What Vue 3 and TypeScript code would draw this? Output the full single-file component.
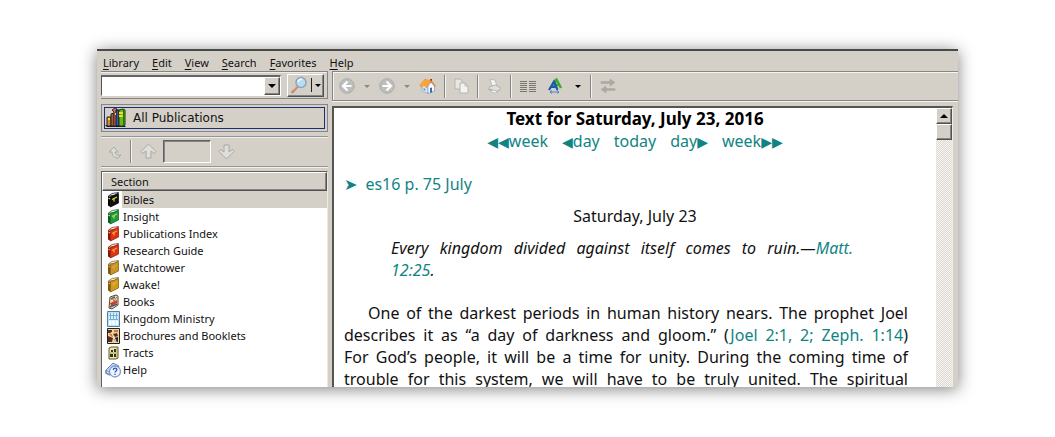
<script setup lang="ts">
import { ref } from 'vue'

interface Section {
  label: string
  icon: 'book' | 'books' | 'grid' | 'brochure' | 'tract' | 'help'
  cover?: string
  edge?: string
  mark?: string
}

const menus: string[] = ['Library', 'Edit', 'View', 'Search', 'Favorites', 'Help']

const sections: Section[] = [
  { label: 'Bibles', icon: 'book', cover: '#111111', edge: '#000000', mark: '#e8dc30' },
  { label: 'Insight', icon: 'book', cover: '#1f9a3c', edge: '#0b5a20', mark: '#b8e060' },
  { label: 'Publications Index', icon: 'book', cover: '#e03218', edge: '#8c1408', mark: '#f0b030' },
  { label: 'Research Guide', icon: 'book', cover: '#e03218', edge: '#8c1408', mark: '#f0b030' },
  { label: 'Watchtower', icon: 'book', cover: '#c8942a', edge: '#80580c', mark: '#d8a840' },
  { label: 'Awake!', icon: 'book', cover: '#cf9a18', edge: '#80580c', mark: '#e0b040' },
  { label: 'Books', icon: 'books' },
  { label: 'Kingdom Ministry', icon: 'grid' },
  { label: 'Brochures and Booklets', icon: 'brochure' },
  { label: 'Tracts', icon: 'tract' },
  { label: 'Help', icon: 'help' },
]

const selected = ref('Bibles')
const query = ref('')
const page = ref('')
</script>

<template>
  <div class="window">
    <nav class="menubar" aria-label="Main menu">
      <button v-for="m in menus" :key="m" type="button"><u>{{ m.charAt(0) }}</u>{{ m.slice(1) }}</button>
    </nav>

    <div class="main">
      <aside class="side">
        <form class="searchbar" @submit.prevent>
          <div class="combo">
            <input v-model="query" type="text" aria-label="Search text">
            <button type="button" class="drop" aria-label="Search history">
              <svg width="8" height="4" viewBox="0 0 8 4"><path d="M0 0h8L4 4z" fill="#000" /></svg>
            </button>
          </div>
          <button type="submit" class="find" aria-label="Search">
            <svg width="18" height="18" viewBox="0 0 18 18">
              <path d="M7.500 10.500 2.500 16" stroke="#c08468" stroke-width="2.600" stroke-linecap="round" />
              <path d="M7.500 9.500 3 14.500" stroke="#ecc0a4" stroke-width="1" />
              <circle cx="11" cy="6.500" r="5" fill="#b4e0f6" stroke="#8fa4b8" stroke-width="1.500" />
              <path d="M8 6a3 3 0 0 1 4-2.500" fill="none" stroke="#fff" stroke-width="1.500" />
            </svg>
            <i></i>
            <svg width="6" height="3" viewBox="0 0 6 3"><path d="M0 0h6L3 3z" fill="#000" /></svg>
          </button>
        </form>

        <div class="filter">
          <button type="button">
            <svg width="21" height="20" viewBox="0 0 21 20">
              <path d="M0 17h19l2 2H2z" fill="#10104a" />
              <path d="M2 9h4v9H2z" fill="#d88830" stroke="#222" />
              <path d="M6 6l3-1v13H6z" fill="#b05820" stroke="#222" />
              <path d="M7 2l3-2 2 1v17H9V4z" fill="#e06868" stroke="#333" />
              <path d="M11 2h3v16h-3z" fill="#3458c0" stroke="#111" />
              <path d="M14 2l4-1 2 1v15l-2 1h-4z" fill="#68b818" stroke="#163c08" />
              <path d="M10 6h1M14 5h4M3 11h2M14 8h4" stroke="#f0e020" stroke-width="2" />
              <path d="M18.500 2v15" stroke="#287008" />
            </svg>
            <span>All Publications</span>
          </button>
        </div>

        <div class="stepper">
          <button type="button" aria-label="Back up" disabled>
            <svg width="14" height="14" viewBox="0 0 14 14">
              <path d="M6 2 1 7h3c0 4 3 6 6 6l3-3c-3 1-6 0-6-3h3z" fill="#dcdcd8" stroke="#aaa9a3" stroke-linejoin="round" />
            </svg>
          </button>
          <i class="rule"></i>
          <button type="button" aria-label="Previous hit" disabled>
            <svg width="17" height="17" viewBox="0 0 17 17">
              <path d="M8.500 1 1 8.500l1.500 2L6 8v7h5V8l3.500 2.500 1.500-2z" fill="#dededb" stroke="#aaa9a3" stroke-linejoin="round" />
            </svg>
          </button>
          <input v-model="page" type="text" aria-label="Hit number" disabled>
          <button type="button" aria-label="Next hit" disabled>
            <svg width="17" height="17" viewBox="0 0 17 17">
              <path d="M8.500 16 1 8.500l1.500-2L6 9V2h5v7l3.500-2.500 1.500 2z" fill="#dededb" stroke="#aaa9a3" stroke-linejoin="round" />
            </svg>
          </button>
        </div>

        <section class="list">
          <h2>Section</h2>
          <ul>
            <li v-for="s in sections" :key="s.label">
              <button type="button" :class="{ on: selected === s.label }" @click="selected = s.label">
                <svg width="17" height="16" viewBox="0 0 17 16">
                  <g v-if="s.icon === 'book'">
                    <path d="M3.500 4 7 1.500l6.500-1-3.500 3z" fill="#f4f4f0" :stroke="s.edge" stroke-width=".7" />
                    <path d="M3 4l2.500 1v10L3 13.500z" :fill="s.edge" />
                    <path d="M5.500 4.500 13.500 1.500v9.500l-8 4z" :fill="s.cover" :stroke="s.edge" stroke-width=".7" />
                    <path d="M7 7.500 12 5M3.500 6l1.500 1M9 7v2.500" :stroke="s.mark" stroke-width="1.200" />
                  </g>
                  <g v-else-if="s.icon === 'books'">
                    <path d="M5 3l6-2 2 1v9l-6 4-3-1z" fill="#f0dfb8" stroke="#594522" />
                    <path d="M5 9l7-3v3l-6 3z" fill="#d03c32" />
                    <path d="M5 13l7-3M6 5l4-2" stroke="#4c557c" stroke-width="1.500" />
                    <path d="M7 4l2 3 3-4" fill="none" stroke="#8d7a45" />
                  </g>
                  <g v-else-if="s.icon === 'grid'">
                    <path d="M2.500.500h12v15h-12z" fill="#b8e2f6" stroke="#527ea0" />
                    <path d="M4 2h9v12H4z" fill="#d8f0fc" />
                    <path d="M5.500 2v7M8.500 2v7M11.500 2v7M4 4.500h9M4 8.500h9" stroke="#78acd0" />
                    <path d="M4 10h2v4H4zM7.500 10h2v4h-2zM11 10h2v4h-2z" fill="#fff" />
                  </g>
                  <g v-else-if="s.icon === 'brochure'">
                    <path d="M2.500.500h12v15h-12z" fill="#f0d49c" stroke="#222" />
                    <path d="M3 2h4v3H3zM8 6l4-1 1 3-3 1zM3 8l5 2-1 4H3z" fill="#5c3018" />
                    <path d="M9 2h4v2H9zM4 6l3-1 2 3-2 1z" fill="#d07440" />
                    <path d="M9 10l4-1v5l-3-1z" fill="#202830" />
                    <path d="M6 4l5 9" stroke="#f8f0e0" />
                  </g>
                  <g v-else-if="s.icon === 'tract'">
                    <path d="M4 3l2-1h7v11l-2 1H4z" fill="#eee5b0" stroke="#5c562c" />
                    <path d="M6 5h2v2H6zM9 4h2v3H9zM5 9h3v3H5zM9 9h2v3H9z" fill="#34361c" />
                    <path d="M12 3v10M5 8h6" stroke="#99a05c" />
                  </g>
                  <g v-else>
                    <path d="M1 8 8 1l6 3-2 3-7 4z" fill="#bfd4ef" stroke="#6a82b4" />
                    <path d="M1 8v3l4 2" fill="none" stroke="#6a82b4" stroke-width="1.500" />
                    <circle cx="10" cy="9.500" r="5.500" fill="#eef5ff" stroke="#7e9ad4" stroke-width="1.300" />
                    <path d="M8.300 8C8.300 5.500 12 5.700 11.800 7.800c0 1.200-1.800 1.200-1.800 2.700M10 11.800v1.200" fill="none" stroke="#2850a8" stroke-width="1.300" />
                  </g>
                </svg>
                <span>{{ s.label }}</span>
              </button>
            </li>
          </ul>
        </section>
      </aside>

      <main class="content">
        <div class="toolbar">
          <button type="button" aria-label="Back" disabled>
            <svg width="16" height="16" viewBox="0 0 16 16">
              <circle cx="8" cy="8" r="7.300" fill="#bdbdbc" stroke="#adadab" />
              <path d="M8.500 3.500 4 8l4.500 4.500M4.500 8h8" fill="none" stroke="#fff" stroke-width="2.200" />
            </svg>
          </button>
          <button type="button" class="caret off" aria-label="Back history" disabled></button>
          <button type="button" aria-label="Forward" disabled>
            <svg width="16" height="16" viewBox="0 0 16 16">
              <circle cx="8" cy="8" r="7.300" fill="#bdbdbc" stroke="#adadab" />
              <path d="M7.500 3.500 12 8l-4.500 4.500M11.500 8h-8" fill="none" stroke="#fff" stroke-width="2.200" />
            </svg>
          </button>
          <button type="button" class="caret off" aria-label="Forward history" disabled></button>
          <button type="button" aria-label="Home">
            <svg width="17" height="16" viewBox="0 0 17 16">
              <path d="M11 1h2v4h-2z" fill="#c42c20" />
              <path d="M3 8v5l6 2.500V8L6 5z" fill="#dce8f4" stroke="#8ba4c4" stroke-width=".7" />
              <path d="M9 8l3-4 3.500 4v5L9 15.500z" fill="#f8fbff" stroke="#7a94bc" stroke-width=".7" />
              <path d="M0.500 7.500 6 1l6 2-3.500 5-1 2L5 7.500l-2 2z" fill="#f6a43c" stroke="#f0983c" stroke-width=".7" />
              <path d="M12 3l4.500 5.500" stroke="#e08840" stroke-width="1.400" />
              <path d="M11 10l2-.5v4.800l-2 .7z" fill="#3c68ac" />
              <path d="M4.500 10l2 .8v2l-2-.8z" fill="#6a9ad0" />
            </svg>
          </button>
          <i class="rule"></i>
          <button type="button" aria-label="Copy" disabled>
            <svg width="15" height="16" viewBox="0 0 15 16">
              <path d="M1 1h5l2 2v8H1z" fill="#e7e7e4" stroke="#b4b4b0" />
              <path d="M6 5h5l3 3v7H6z" fill="#f3f3f1" stroke="#b4b4b0" />
              <path d="M11 5v3h3" fill="none" stroke="#b4b4b0" />
            </svg>
          </button>
          <i class="rule"></i>
          <button type="button" aria-label="Print" disabled>
            <svg width="15" height="16" viewBox="0 0 15 16">
              <path d="M3 1l5 1 2 6H5z" fill="#f3f3f1" stroke="#bdbdb9" />
              <path d="M2 9l6-2 6 3-4 4-8-2z" fill="#dededb" stroke="#b4b4b0" />
              <path d="M2 11l8 2.500 3-2" fill="none" stroke="#a9a9a5" />
              <path d="M5 12l5 1-1 2-5-1z" fill="#f7f7f5" stroke="#b4b4b0" stroke-width=".7" />
            </svg>
          </button>
          <i class="rule"></i>
          <button type="button" aria-label="Columns">
            <svg width="16" height="13" viewBox="0 0 16 13">
              <path d="M0 1.500h7M9 1.500h7M0 3.500h7M9 3.500h7M0 5.500h7M9 5.500h7M0 7.500h7M9 7.500h7M0 9.500h7M9 9.500h7M0 11.500h7M9 11.500h7" stroke="#777774" />
            </svg>
          </button>
          <button type="button" class="size" aria-label="Text size">
            <svg width="14" height="16" viewBox="0 0 14 16">
              <path d="M5 9 8.500 1.500 13 10M6 7h5" fill="none" stroke="#35ae28" stroke-width="2.400" />
              <path d="M1 12 6 3.500 9.500 12M3 9h5" fill="none" stroke="#2156b0" stroke-width="2.200" />
              <path d="M2 14h9M4 12.500 2 14l2 1.500M9 12.500l2 1.500-2 1.500" fill="none" stroke="#4486d4" />
            </svg>
          </button>
          <button type="button" class="caret" aria-label="Text size options"></button>
          <i class="rule"></i>
          <button type="button" aria-label="Synchronize" disabled>
            <svg width="16" height="16" viewBox="0 0 16 16">
              <path d="M1 3.500h9V1l5 3.500L10 8V5.500H1zM15 10.500H6V8l-5 3.500L6 15v-2.500h9z" fill="#a9a9a5" stroke="#a9a9a5" stroke-width=".6" />
            </svg>
          </button>
        </div>

        <div class="viewer">
          <article>
            <h1>Text for Saturday, July 23, 2016</h1>
            <nav class="jump" aria-label="Daily text">
              <a href="#pw"><b>◀◀</b>week</a>
              <a href="#pd"><b>◀</b>day</a>
              <a href="#today">today</a>
              <a href="#nd">day<b>▶</b></a>
              <a href="#nw">week<b>▶▶</b></a>
            </nav>
            <p class="source"><a href="#es16"><span>➤</span>es16 p. 75 July</a></p>
            <p class="date">Saturday, July 23</p>
            <blockquote>Every kingdom divided against itself comes to ruin.—<a href="#matt">Matt.<br>12:25</a>.</blockquote>
            <p class="body">
              One of the darkest periods in human history nears. The prophet Joel<br>
              describes it as “a day of darkness and gloom.” (<a href="#joel">Joel 2:1, 2; Zeph. 1:14</a>)<br>
              For God’s people, it will be a time for unity. During the coming time of<br>
              trouble for this system, we will have to be truly united. The spiritual
            </p>
          </article>
          <div class="scroll">
            <button type="button" aria-label="Scroll up">
              <svg width="8" height="4" viewBox="0 0 8 4"><path d="M0 4h8L4 0z" fill="#000" /></svg>
            </button>
            <div class="thumb"></div>
          </div>
        </div>
      </main>
    </div>
  </div>
</template>

<style>
body {
  margin: 0;
  background: #fff;
}
</style>

<style scoped>
* {
  box-sizing: border-box;
}

.window {
  display: flex;
  flex-direction: column;
  height: calc(100vh - 99px);
  margin: 49px 97px 50px;
  overflow: hidden;
  border-top: 2px solid #4a4a46;
  border-radius: 0 0 3px 3px;
  background: #d4d0c8;
  box-shadow: 0 2px 16px rgba(0, 0, 0, 0.5);
  color: #111;
  font: 11px/17px "Noto Sans", sans-serif;
}

button {
  display: flex;
  align-items: center;
  margin: 0;
  padding: 0;
  border: 0;
  background: none;
  color: inherit;
  font: inherit;
}

svg {
  display: block;
  flex: none;
}

.menubar {
  display: flex;
  flex: none;
  gap: 13px;
  height: 20px;
  padding: 3px 6px 0;
}

.menubar u {
  text-underline-offset: 2px;
}

.main {
  display: flex;
  flex: 1;
  gap: 4px;
  min-height: 0;
}

.side {
  display: flex;
  flex: none;
  flex-direction: column;
  width: 231px;
  padding-left: 4px;
}

.searchbar {
  display: flex;
  flex: none;
  align-items: center;
  gap: 6px;
  height: 28px;
  border: solid #858585;
  border-width: 1px 1px 1px 0;
  box-shadow: inset 0 1px #efede8;
}

.combo {
  display: flex;
  width: 180px;
  height: 21px;
  border: 1px solid #fff;
  border-top: 2px solid #666;
  border-left: 1px solid #555;
  background: #fff;
}

.combo input {
  flex: 1;
  min-width: 0;
  padding: 0 3px;
  border: 0;
  outline: 0;
  background: #fff;
  font: inherit;
}

.drop,
.find,
.scroll button,
.thumb {
  border: 1px solid;
  border-color: #fff #505050 #505050 #fff;
  background: #d4d0c8;
  box-shadow: inset -1px -1px #858585;
}

.drop {
  justify-content: center;
  width: 16px;
}

.find {
  justify-content: center;
  gap: 3px;
  width: 37px;
  height: 23px;
}

.find i {
  width: 1px;
  height: 14px;
  background: #222;
}

.filter {
  flex: none;
  height: 28px;
  margin-top: 5px;
  padding: 2px;
  border: 1px solid #858585;
}

.filter button {
  gap: 7px;
  width: 100%;
  height: 22px;
  border: 1px solid #1c2e7a;
  font: 12px/17px "DejaVu Sans", sans-serif;
}

.stepper {
  display: flex;
  flex: none;
  align-items: center;
  height: 31px;
  margin-top: 4px;
  padding-left: 7px;
  border: solid #949494;
  border-width: 1px 0;
  box-shadow: inset 0 1px #f2f0ec, 0 1px #f2f0ec;
}

.rule {
  flex: none;
  width: 2px;
  height: 23px;
  border-left: 1px solid #858585;
  background: #f6f4f0;
}

.stepper .rule {
  margin: 0 8px;
}

.stepper input {
  width: 48px;
  height: 23px;
  margin: 0 7px 0 6px;
  padding: 0 3px;
  border: 1px solid;
  border-color: #606060 #fff #fff #606060;
  background: #d4d0c8;
  box-shadow: inset 1px 1px #858585;
  font: inherit;
}

.list {
  flex: 1;
  min-height: 0;
  margin-top: 4px;
  overflow: hidden;
  border: solid #606060;
  border-width: 1px 1px 0;
  border-right-color: #ece9e3;
  background: #fff;
}

.list h2 {
  height: 19px;
  margin: 0;
  padding-left: 8px;
  border: 1px solid;
  border-color: #fff #505050 #505050 #fff;
  background: #d4d0c8;
  box-shadow: inset -1px -1px #858585;
  font: 11px/18px "Noto Sans", sans-serif;
}

.list ul {
  margin: 0;
  padding: 0;
  list-style: none;
}

.list li button {
  width: 100%;
  height: 17px;
  padding-left: 3px;
}

.list li span {
  flex: 1;
  padding-left: 1px;
  text-align: left;
  line-height: 17px;
}

.list .on span {
  background: #d4d0c8;
}

.content {
  display: flex;
  flex: 1;
  flex-direction: column;
  min-width: 0;
}

.toolbar {
  display: flex;
  flex: none;
  align-items: center;
  height: 30px;
  padding-left: 6px;
  border: solid #858585;
  border-width: 1px 0 1px 1px;
  box-shadow: inset 1px 1px #f6f4f0, 0 1px #f6f4f0;
}

.toolbar button {
  margin-right: 8px;
}

.caret {
  width: 8px;
  height: 16px;
  justify-content: center;
}

.caret::before {
  border: solid transparent;
  border-width: 3px 3px 0;
  border-top-color: #000;
  content: "";
}

.caret.off::before {
  border-top-color: #8a8a88;
}

.size {
  justify-content: center;
  width: 22px;
}

.toolbar .rule {
  margin-right: 8px;
}

.viewer {
  display: flex;
  flex: 1;
  min-height: 0;
  margin: 5px 5px 0 0;
  overflow: hidden;
  border: 2px solid #55554f;
  border-width: 2px 1px 0 2px;
  border-right-color: #efece6;
  background: #fff;
}

article {
  flex: 1;
  min-width: 0;
  padding: 0 10px;
  color: #111;
  font: 16px/22px "Noto Sans", sans-serif;
}

article h1,
article p,
blockquote {
  margin: 0;
  font-size: 16px;
}

article h1 {
  color: #000;
  font-size: 17px;
  line-height: 22px;
  text-align: center;
}

a {
  color: #108484;
  text-decoration: none;
}

.jump {
  display: flex;
  justify-content: center;
  gap: 14px;
}

.jump b {
  font: 14px/20px "DejaVu Sans", sans-serif;
}

article .source {
  margin-top: 21px;
}

.source span {
  margin-right: 8px;
  font: 16px/20px "DejaVu Sans", sans-serif;
}

article .date {
  margin-top: 10px;
  text-align: center;
}

blockquote {
  padding: 10px 73px 0 47px;
  font-style: italic;
  text-align: justify;
  text-align-last: justify;
}

article .body {
  margin-top: 21px;
  padding-right: 18px;
  text-align: justify;
  text-align-last: justify;
  text-indent: 24px;
}

.scroll {
  flex: none;
  width: 16px;
  background: repeating-conic-gradient(#dedbd5 0 25%, #f4f3f0 0 50%) 0 0 / 2px 2px;
}

.scroll button {
  justify-content: center;
  width: 100%;
  height: 16px;
}

.thumb {
  height: 16px;
}
</style>
